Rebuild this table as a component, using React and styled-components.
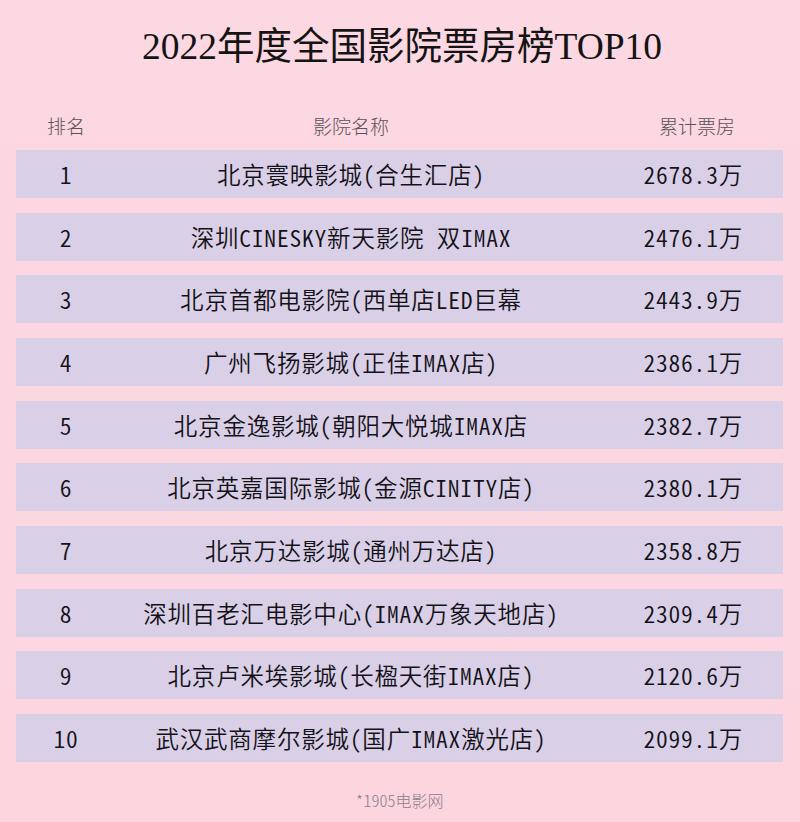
import React from 'react';
import styled, { createGlobalStyle } from 'styled-components';

const GlobalStyle = createGlobalStyle`
    html, body {
        margin: 0;
        padding: 0;
        background: #fcd7e1;
    }
`;

const rows = [
    { rank: '1', name: '北京寰映影城(合生汇店）', amount: '2678.3万' },
    { rank: '2', name: '深圳CINESKY新天影院 双IMAX', amount: '2476.1万' },
    { rank: '3', name: '北京首都电影院(西单店LED巨幕', amount: '2443.9万' },
    { rank: '4', name: '广州飞扬影城(正佳IMAX店）', amount: '2386.1万' },
    { rank: '5', name: '北京金逸影城(朝阳大悦城IMAX店', amount: '2382.7万' },
    { rank: '6', name: '北京英嘉国际影城(金源CINITY店）', amount: '2380.1万' },
    { rank: '7', name: '北京万达影城(通州万达店）', amount: '2358.8万' },
    { rank: '8', name: '深圳百老汇电影中心(IMAX万象天地店）', amount: '2309.4万' },
    { rank: '9', name: '北京卢米埃影城(长楹天街IMAX店）', amount: '2120.6万' },
    { rank: '10', name: '武汉武商摩尔影城(国广IMAX激光店）', amount: '2099.1万' },
];

const Page = styled.div`
    width: 800px;
    height: 822px;
    box-sizing: border-box;
    padding: 27px 17px 0 16px;
    background: linear-gradient(#fcd8e2, #fcd5df);
    display: flex;
    flex-direction: column;
`;

const Title = styled.h1`
    margin: 0 0 0 5px;
    height: 40px;
    line-height: 40px;
    text-align: center;
    font-family: "Liberation Serif", "Noto Sans CJK SC", serif;
    font-size: 37.5px;
    font-weight: 400;
    color: #141414;
`;

const Grid = styled.div`
    display: grid;
    grid-template-columns: 100px 470px 1fr;
    align-items: center;
`;

const HeaderRow = styled(Grid)`
    margin-top: 43px;
    height: 30px;
    margin-bottom: 10px;
    font-family: "Noto Sans CJK SC", sans-serif;
    font-size: 19px;
    font-weight: 300;
    color: #5a5258;
`;

const List = styled.div`
    display: flex;
    flex-direction: column;
    gap: 14.67px;
`;

const Row = styled(Grid)`
    height: 48px;
    background: #d9d0e7;
    font-family: "Noto Sans CJK SC", sans-serif;
    font-feature-settings: "hwid" 1;
    font-size: 23.5px;
    font-weight: 350;
    letter-spacing: 0.8px;
    color: #141118;
`;

const Cell = styled.div`
    text-align: ${p => p.align || 'center'};
    padding-right: ${p => p.pr || 0}px;
    white-space: nowrap;
`;

const Footer = styled.div`
    margin-top: 26px;
    text-align: center;
    font-family: "Noto Sans CJK SC", sans-serif;
    font-feature-settings: "hwid" 1;
    font-size: 16px;
    font-weight: 300;
    color: #8a8088;
`;

export default function App() {
    return (
        <Page>
            <GlobalStyle/>
            <Title>2022年度全国影院票房榜TOP10</Title>
            <HeaderRow>
                <Cell>排名</Cell>
                <Cell>影院名称</Cell>
                <Cell align="right" pr={48}>累计票房</Cell>
            </HeaderRow>
            <List>
                {rows.map(r => (
                    <Row key={r.rank}>
                        <Cell>{r.rank}</Cell>
                        <Cell>{r.name}</Cell>
                        <Cell align="right" pr={40}>{r.amount}</Cell>
                    </Row>
                ))}
            </List>
            <Footer>*1905电影网</Footer>
        </Page>
    );
}
